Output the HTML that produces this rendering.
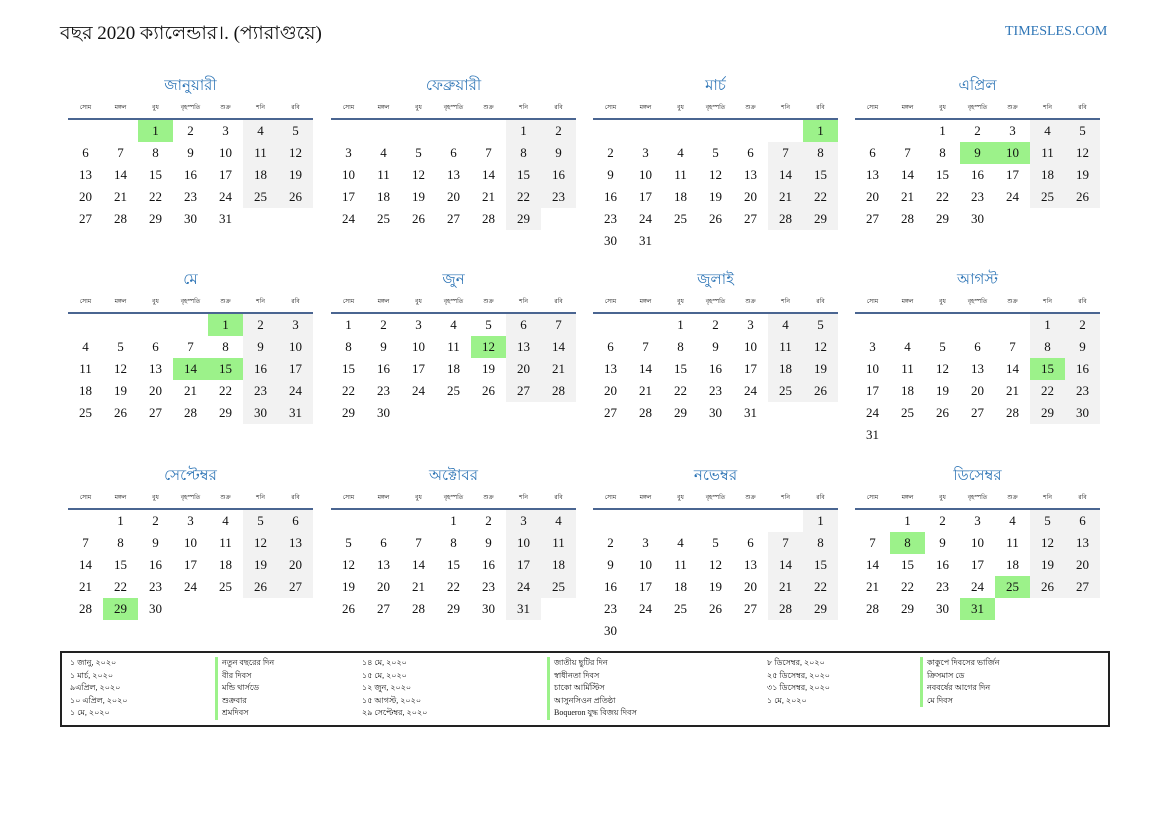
<!DOCTYPE html>
<html><head><meta charset="utf-8"><style>
body{margin:0;width:1169px;height:827px;background:#fff;position:relative;font-family:"Liberation Serif",serif;color:#111;overflow:hidden}
.t{position:absolute;left:60px;top:19px;font-size:19px}
.w{position:absolute;left:1005px;top:24px;font-size:14px;color:#2e75b6}
.m{position:absolute;width:245px}
.m h3{margin:2px 0 0;height:24px;line-height:24px;text-align:center;font-weight:normal;font-size:15px;color:#2e75b6}
table{border-collapse:collapse;table-layout:fixed;width:245px;margin-top:-1px}
th{font-weight:normal;font-size:6px;height:21px;padding:0;border-bottom:2px solid #4a6591;width:35px}
td{height:22px;padding:0;text-align:center;font-size:13px}
.g{background:#f2f2f2}.h{background:#9cf28a}
.lg{position:absolute;left:60px;top:651px;width:1046px;height:72px;border:2px solid #222;font-size:8px}
.lg div{position:absolute;line-height:12.5px}
.b{border-left:3px solid #9cf28a;padding-left:4px}
</style></head><body>
<div class="t">বছর 2020 ক্যালেন্ডার।. (প্যারাগুয়ে)</div>
<div class="w">TIMESLES.COM</div>

<div class="m" style="left:68px;top:72px"><h3>জানুয়ারী</h3><table><tr><th>সোম</th><th>মঙ্গল</th><th>বুধ</th><th>বৃহস্পতি</th><th>শুক্র</th><th>শনি</th><th>রবি</th></tr>
<tr><td></td><td></td><td class="h">1</td><td>2</td><td>3</td><td class="g">4</td><td class="g">5</td></tr>
<tr><td>6</td><td>7</td><td>8</td><td>9</td><td>10</td><td class="g">11</td><td class="g">12</td></tr>
<tr><td>13</td><td>14</td><td>15</td><td>16</td><td>17</td><td class="g">18</td><td class="g">19</td></tr>
<tr><td>20</td><td>21</td><td>22</td><td>23</td><td>24</td><td class="g">25</td><td class="g">26</td></tr>
<tr><td>27</td><td>28</td><td>29</td><td>30</td><td>31</td><td></td><td></td></tr></table></div>

<div class="m" style="left:331px;top:72px"><h3>ফেব্রুয়ারী</h3><table><tr><th>সোম</th><th>মঙ্গল</th><th>বুধ</th><th>বৃহস্পতি</th><th>শুক্র</th><th>শনি</th><th>রবি</th></tr>
<tr><td></td><td></td><td></td><td></td><td></td><td class="g">1</td><td class="g">2</td></tr>
<tr><td>3</td><td>4</td><td>5</td><td>6</td><td>7</td><td class="g">8</td><td class="g">9</td></tr>
<tr><td>10</td><td>11</td><td>12</td><td>13</td><td>14</td><td class="g">15</td><td class="g">16</td></tr>
<tr><td>17</td><td>18</td><td>19</td><td>20</td><td>21</td><td class="g">22</td><td class="g">23</td></tr>
<tr><td>24</td><td>25</td><td>26</td><td>27</td><td>28</td><td class="g">29</td><td></td></tr></table></div>

<div class="m" style="left:593px;top:72px"><h3>মার্চ</h3><table><tr><th>সোম</th><th>মঙ্গল</th><th>বুধ</th><th>বৃহস্পতি</th><th>শুক্র</th><th>শনি</th><th>রবি</th></tr>
<tr><td></td><td></td><td></td><td></td><td></td><td></td><td class="h">1</td></tr>
<tr><td>2</td><td>3</td><td>4</td><td>5</td><td>6</td><td class="g">7</td><td class="g">8</td></tr>
<tr><td>9</td><td>10</td><td>11</td><td>12</td><td>13</td><td class="g">14</td><td class="g">15</td></tr>
<tr><td>16</td><td>17</td><td>18</td><td>19</td><td>20</td><td class="g">21</td><td class="g">22</td></tr>
<tr><td>23</td><td>24</td><td>25</td><td>26</td><td>27</td><td class="g">28</td><td class="g">29</td></tr>
<tr><td>30</td><td>31</td><td></td><td></td><td></td><td></td><td></td></tr></table></div>

<div class="m" style="left:855px;top:72px"><h3>এপ্রিল</h3><table><tr><th>সোম</th><th>মঙ্গল</th><th>বুধ</th><th>বৃহস্পতি</th><th>শুক্র</th><th>শনি</th><th>রবি</th></tr>
<tr><td></td><td></td><td>1</td><td>2</td><td>3</td><td class="g">4</td><td class="g">5</td></tr>
<tr><td>6</td><td>7</td><td>8</td><td class="h">9</td><td class="h">10</td><td class="g">11</td><td class="g">12</td></tr>
<tr><td>13</td><td>14</td><td>15</td><td>16</td><td>17</td><td class="g">18</td><td class="g">19</td></tr>
<tr><td>20</td><td>21</td><td>22</td><td>23</td><td>24</td><td class="g">25</td><td class="g">26</td></tr>
<tr><td>27</td><td>28</td><td>29</td><td>30</td><td></td><td></td><td></td></tr></table></div>

<div class="m" style="left:68px;top:266px"><h3>মে</h3><table><tr><th>সোম</th><th>মঙ্গল</th><th>বুধ</th><th>বৃহস্পতি</th><th>শুক্র</th><th>শনি</th><th>রবি</th></tr>
<tr><td></td><td></td><td></td><td></td><td class="h">1</td><td class="g">2</td><td class="g">3</td></tr>
<tr><td>4</td><td>5</td><td>6</td><td>7</td><td>8</td><td class="g">9</td><td class="g">10</td></tr>
<tr><td>11</td><td>12</td><td>13</td><td class="h">14</td><td class="h">15</td><td class="g">16</td><td class="g">17</td></tr>
<tr><td>18</td><td>19</td><td>20</td><td>21</td><td>22</td><td class="g">23</td><td class="g">24</td></tr>
<tr><td>25</td><td>26</td><td>27</td><td>28</td><td>29</td><td class="g">30</td><td class="g">31</td></tr></table></div>

<div class="m" style="left:331px;top:266px"><h3>জুন</h3><table><tr><th>সোম</th><th>মঙ্গল</th><th>বুধ</th><th>বৃহস্পতি</th><th>শুক্র</th><th>শনি</th><th>রবি</th></tr>
<tr><td>1</td><td>2</td><td>3</td><td>4</td><td>5</td><td class="g">6</td><td class="g">7</td></tr>
<tr><td>8</td><td>9</td><td>10</td><td>11</td><td class="h">12</td><td class="g">13</td><td class="g">14</td></tr>
<tr><td>15</td><td>16</td><td>17</td><td>18</td><td>19</td><td class="g">20</td><td class="g">21</td></tr>
<tr><td>22</td><td>23</td><td>24</td><td>25</td><td>26</td><td class="g">27</td><td class="g">28</td></tr>
<tr><td>29</td><td>30</td><td></td><td></td><td></td><td></td><td></td></tr></table></div>

<div class="m" style="left:593px;top:266px"><h3>জুলাই</h3><table><tr><th>সোম</th><th>মঙ্গল</th><th>বুধ</th><th>বৃহস্পতি</th><th>শুক্র</th><th>শনি</th><th>রবি</th></tr>
<tr><td></td><td></td><td>1</td><td>2</td><td>3</td><td class="g">4</td><td class="g">5</td></tr>
<tr><td>6</td><td>7</td><td>8</td><td>9</td><td>10</td><td class="g">11</td><td class="g">12</td></tr>
<tr><td>13</td><td>14</td><td>15</td><td>16</td><td>17</td><td class="g">18</td><td class="g">19</td></tr>
<tr><td>20</td><td>21</td><td>22</td><td>23</td><td>24</td><td class="g">25</td><td class="g">26</td></tr>
<tr><td>27</td><td>28</td><td>29</td><td>30</td><td>31</td><td></td><td></td></tr></table></div>

<div class="m" style="left:855px;top:266px"><h3>আগস্ট</h3><table><tr><th>সোম</th><th>মঙ্গল</th><th>বুধ</th><th>বৃহস্পতি</th><th>শুক্র</th><th>শনি</th><th>রবি</th></tr>
<tr><td></td><td></td><td></td><td></td><td></td><td class="g">1</td><td class="g">2</td></tr>
<tr><td>3</td><td>4</td><td>5</td><td>6</td><td>7</td><td class="g">8</td><td class="g">9</td></tr>
<tr><td>10</td><td>11</td><td>12</td><td>13</td><td>14</td><td class="h">15</td><td class="g">16</td></tr>
<tr><td>17</td><td>18</td><td>19</td><td>20</td><td>21</td><td class="g">22</td><td class="g">23</td></tr>
<tr><td>24</td><td>25</td><td>26</td><td>27</td><td>28</td><td class="g">29</td><td class="g">30</td></tr>
<tr><td>31</td><td></td><td></td><td></td><td></td><td></td><td></td></tr></table></div>

<div class="m" style="left:68px;top:462px"><h3>সেপ্টেম্বর</h3><table><tr><th>সোম</th><th>মঙ্গল</th><th>বুধ</th><th>বৃহস্পতি</th><th>শুক্র</th><th>শনি</th><th>রবি</th></tr>
<tr><td></td><td>1</td><td>2</td><td>3</td><td>4</td><td class="g">5</td><td class="g">6</td></tr>
<tr><td>7</td><td>8</td><td>9</td><td>10</td><td>11</td><td class="g">12</td><td class="g">13</td></tr>
<tr><td>14</td><td>15</td><td>16</td><td>17</td><td>18</td><td class="g">19</td><td class="g">20</td></tr>
<tr><td>21</td><td>22</td><td>23</td><td>24</td><td>25</td><td class="g">26</td><td class="g">27</td></tr>
<tr><td>28</td><td class="h">29</td><td>30</td><td></td><td></td><td></td><td></td></tr></table></div>

<div class="m" style="left:331px;top:462px"><h3>অক্টোবর</h3><table><tr><th>সোম</th><th>মঙ্গল</th><th>বুধ</th><th>বৃহস্পতি</th><th>শুক্র</th><th>শনি</th><th>রবি</th></tr>
<tr><td></td><td></td><td></td><td>1</td><td>2</td><td class="g">3</td><td class="g">4</td></tr>
<tr><td>5</td><td>6</td><td>7</td><td>8</td><td>9</td><td class="g">10</td><td class="g">11</td></tr>
<tr><td>12</td><td>13</td><td>14</td><td>15</td><td>16</td><td class="g">17</td><td class="g">18</td></tr>
<tr><td>19</td><td>20</td><td>21</td><td>22</td><td>23</td><td class="g">24</td><td class="g">25</td></tr>
<tr><td>26</td><td>27</td><td>28</td><td>29</td><td>30</td><td class="g">31</td><td></td></tr></table></div>

<div class="m" style="left:593px;top:462px"><h3>নভেম্বর</h3><table><tr><th>সোম</th><th>মঙ্গল</th><th>বুধ</th><th>বৃহস্পতি</th><th>শুক্র</th><th>শনি</th><th>রবি</th></tr>
<tr><td></td><td></td><td></td><td></td><td></td><td></td><td class="g">1</td></tr>
<tr><td>2</td><td>3</td><td>4</td><td>5</td><td>6</td><td class="g">7</td><td class="g">8</td></tr>
<tr><td>9</td><td>10</td><td>11</td><td>12</td><td>13</td><td class="g">14</td><td class="g">15</td></tr>
<tr><td>16</td><td>17</td><td>18</td><td>19</td><td>20</td><td class="g">21</td><td class="g">22</td></tr>
<tr><td>23</td><td>24</td><td>25</td><td>26</td><td>27</td><td class="g">28</td><td class="g">29</td></tr>
<tr><td>30</td><td></td><td></td><td></td><td></td><td></td><td></td></tr></table></div>

<div class="m" style="left:855px;top:462px"><h3>ডিসেম্বর</h3><table><tr><th>সোম</th><th>মঙ্গল</th><th>বুধ</th><th>বৃহস্পতি</th><th>শুক্র</th><th>শনি</th><th>রবি</th></tr>
<tr><td></td><td>1</td><td>2</td><td>3</td><td>4</td><td class="g">5</td><td class="g">6</td></tr>
<tr><td>7</td><td class="h">8</td><td>9</td><td>10</td><td>11</td><td class="g">12</td><td class="g">13</td></tr>
<tr><td>14</td><td>15</td><td>16</td><td>17</td><td>18</td><td class="g">19</td><td class="g">20</td></tr>
<tr><td>21</td><td>22</td><td>23</td><td>24</td><td class="h">25</td><td class="g">26</td><td class="g">27</td></tr>
<tr><td>28</td><td>29</td><td>30</td><td class="h">31</td><td></td><td></td><td></td></tr></table></div>

<div class="lg">
<div style="left:8px;top:4px">১ জানু, ২০২০<br>১ মার্চ, ২০২০<br>৯এপ্রিল, ২০২০<br>১০ এপ্রিল, ২০২০<br>১ মে, ২০২০</div>
<div class="b" style="left:153px;top:4px">নতুন বছরের দিন<br>বীর দিবস<br>মন্ডি থার্সডে<br>শুক্রবার<br>শ্রমদিবস</div>
<div style="left:300px;top:4px">১৪ মে, ২০২০<br>১৫ মে, ২০২০<br>১২ জুন, ২০২০<br>১৫ আগস্ট, ২০২০<br>২৯ সেপ্টেম্বর, ২০২০</div>
<div class="b" style="left:485px;top:4px">জাতীয় ছুটির দিন<br>স্বাধীনতা দিবস<br>চাকো আর্মিস্টিস<br>আসুনসিওন প্রতিষ্ঠা<br>Boqueron যুদ্ধ বিজয় দিবস</div>
<div style="left:705px;top:4px">৮ ডিসেম্বর, ২০২০<br>২৫ ডিসেম্বর, ২০২০<br>৩১ ডিসেম্বর, ২০২০<br>১ মে, ২০২০</div>
<div class="b" style="left:858px;top:4px">কাকুপে দিবসের ভার্জিন<br>ক্রিসমাস ডে<br>নববর্ষের আগের দিন<br>মে দিবস</div>
</div>
</body></html>
